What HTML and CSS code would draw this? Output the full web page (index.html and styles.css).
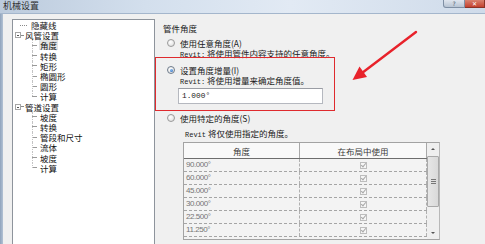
FILE: index.html
```html
<!DOCTYPE html>
<html lang="zh-CN">
<head>
<meta charset="utf-8">
<title>机械设置</title>
<link rel="stylesheet" href="styles.css">
</head>
<body>
<div class="window">
  <div class="titlebar">
    <span class="title">机械设置</span>
    <div class="caption-btns">
      <span class="cbtn help">?</span>
      <span class="cbtn close">✕</span>
    </div>
  </div>
  <div class="main">
    <div class="frame-left"></div>
    <ul class="tree">
      <li class="row top leaf"><span class="conn"></span><span class="txt">隐藏线</span></li>
      <li class="row top parent"><span class="exp"></span><span class="conn"></span><span class="txt">风管设置</span></li>
      <li class="row child"><span class="conn"></span><span class="txt sel">角度</span></li>
      <li class="row child"><span class="conn"></span><span class="txt">转换</span></li>
      <li class="row child"><span class="conn"></span><span class="txt">矩形</span></li>
      <li class="row child"><span class="conn"></span><span class="txt">椭圆形</span></li>
      <li class="row child"><span class="conn"></span><span class="txt">圆形</span></li>
      <li class="row child last"><span class="conn"></span><span class="txt">计算</span></li>
      <li class="row top parent"><span class="exp"></span><span class="conn"></span><span class="txt">管道设置</span></li>
      <li class="row child"><span class="conn"></span><span class="txt">坡度</span></li>
      <li class="row child"><span class="conn"></span><span class="txt">转换</span></li>
      <li class="row child"><span class="conn"></span><span class="txt">管段和尺寸</span></li>
      <li class="row child"><span class="conn"></span><span class="txt">流体</span></li>
      <li class="row child"><span class="conn"></span><span class="txt">坡度</span></li>
      <li class="row child last"><span class="conn"></span><span class="txt">计算</span></li>
    </ul>
    <div class="content">
      <div class="heading">管件角度</div>
      <div class="opt opt1"><span class="radio"></span><span class="lbl">使用任意角度(A)</span></div>
      <div class="desc"><span class="latin">Revit:</span> 将使用管件内容支持的任意角度。</div>
      <div class="opt opt2"><span class="radio checked"></span><span class="lbl">设置角度增量(I)</span></div>
      <div class="desc"><span class="latin">Revit:</span> 将使用增量来确定角度值。</div>
      <div class="input">1.000°</div>
      <div class="opt opt3"><span class="radio"></span><span class="lbl">使用特定的角度(S)</span></div>
      <div class="desc desc3"><span class="latin">Revit</span> 将仅使用指定的角度。</div>
      <div class="table">
        <div class="grid">
          <div class="thead"><div class="th c1">角度</div><div class="th c2">在布局中使用</div></div>
          <div class="tr"><div class="td c1">90.000°</div><div class="td c2"><span class="chk"></span></div></div>
          <div class="tr"><div class="td c1">60.000°</div><div class="td c2"><span class="chk"></span></div></div>
          <div class="tr"><div class="td c1">45.000°</div><div class="td c2"><span class="chk"></span></div></div>
          <div class="tr"><div class="td c1">30.000°</div><div class="td c2"><span class="chk"></span></div></div>
          <div class="tr"><div class="td c1">22.500°</div><div class="td c2"><span class="chk"></span></div></div>
          <div class="tr"><div class="td c1">11.250°</div><div class="td c2"><span class="chk"></span></div></div>
        </div>
        <div class="vscroll">
          <span class="sarrow up"></span>
          <span class="thumb"><span class="grip"></span></span>
          <span class="strack"></span>
          <span class="sarrow down"></span>
        </div>
      </div>
    </div>
  </div>
  <div class="annot-box"></div>
  <svg class="annot-arrow" width="485" height="244" viewBox="0 0 485 244">
    <line x1="416" y1="32" x2="362" y2="73" stroke="#e8222b" stroke-width="2.4" stroke-linecap="round"/>
    <polygon points="352.5,80 367,77 359.5,66.5" fill="#e8222b"/>
  </svg>
</div>
</body>
</html>
```

FILE: styles.css
```css
* { box-sizing: border-box; }
html, body { margin: 0; padding: 0; }
body {
  width: 485px;
  height: 244px;
  overflow: hidden;
  background: #f0f0f0;
  font-family: "Noto Sans CJK SC", "Noto Sans", sans-serif;
  font-size: 8.5px;
  color: #1a1a1a;
}
.window {
  position: relative;
  width: 485px;
  height: 244px;
  display: flex;
  flex-direction: column;
}
.titlebar {
  height: 14px;
  flex: none;
  display: flex;
  align-items: flex-start;
  background: linear-gradient(to right, #bccbdd 0%, #d3dfed 30%, #e2eaf4 60%, #cfdbea 100%);
  border-bottom: 1px solid #a4b6cc;
}
.title {
  padding-left: 3px;
  height: 11px;
  line-height: 11px;
  overflow: hidden;
  color: #2e2e2e;
  font-size: 9px;
}
.caption-btns {
  margin-left: auto;
  display: flex;
}
.cbtn {
  height: 8px;
  display: flex;
  align-items: center;
  justify-content: center;
  font-family: "DejaVu Sans", sans-serif;
  font-size: 6px;
  line-height: 8px;
  overflow: hidden;
}
.help {
  width: 22px;
  background: linear-gradient(#dfe5ee, #b8c4d3);
  border: 1px solid #7f8fa4;
  border-top: none;
  border-radius: 0 0 0 3px;
  color: #4b5a6e;
}
.close {
  width: 20px;
  background: linear-gradient(#d9826f, #c4412f);
  border: 1px solid #8a3326;
  border-top: none;
  border-left: none;
  color: #fff;
  font-weight: bold;
}
.main {
  flex: 1;
  display: flex;
  min-height: 0;
}
.frame-left {
  width: 3px;
  flex: none;
  background: linear-gradient(to right, #8fa3bc, #b3c2d4);
}
.tree {
  list-style: none;
  margin: 5px 0 0 9px;
  padding: 0;
  width: 143px;
  flex: none;
  background: #fff;
  border: 1px solid #8e949c;
  border-bottom: none;
}
.row {
  position: relative;
  height: 10.2px;
  display: flex;
  align-items: center;
  white-space: nowrap;
  color: #111;
}
.row .conn {
  height: 0;
  border-top: 1px dotted #8a8a8a;
  flex: none;
}
.row.leaf .conn { margin-left: 7px; width: 7px; margin-right: 3px; }
.row.parent .exp {
  margin-left: 2px;
  width: 6px;
  height: 6px;
  border: 1px solid #a6a6a6;
  position: relative;
  flex: none;
  background: #fff;
}
.row.parent .exp::after {
  content: "";
  position: absolute;
  left: 1px;
  right: 1px;
  top: 2px;
  border-top: 1px solid #555;
}
.row.parent .conn { width: 2px; margin-right: 1px; }
.row.child .conn { margin-left: 19px; width: 5px; border-top: 1px solid #9a9a9a; margin-right: 2px; }
.row.child::before {
  content: "";
  position: absolute;
  left: 19px;
  top: 0;
  bottom: 0;
  border-left: 1px dotted #c4c4c4;
}
.row.child.last::before { bottom: 50%; }
.txt {
  display: block;
  height: 10px;
  line-height: 10px;
  padding: 0 1px;
  overflow: visible;
}
.txt.sel { background: #e3e3e3; }

.content {
  flex: 1;
  display: flex;
  flex-direction: column;
  align-items: flex-start;
  padding-top: 9px;
  line-height: 10px;
  white-space: nowrap;
}
.heading { margin-left: 8px; height: 10px; }
.opt {
  display: flex;
  align-items: center;
  height: 10px;
  margin-left: 12px;
  gap: 5px;
}
.lbl { display: block; height: 10px; line-height: 10px; }
.opt1 { margin-top: 5px; }
.opt2 { margin-top: 7px; }
.opt3 { margin-top: 9px; }
.radio {
  width: 8px;
  height: 8px;
  border-radius: 50%;
  border: 1px solid #9a9a9a;
  background: radial-gradient(circle at 40% 35%, #ffffff 0%, #e8e8e8 60%, #d4d4d4 100%);
  flex: none;
  position: relative;
}
.radio.checked { border-color: #6f7c8c; }
.radio.checked::after {
  content: "";
  position: absolute;
  left: 1.5px;
  top: 1.5px;
  width: 3px;
  height: 3px;
  border-radius: 50%;
  background: radial-gradient(circle at 40% 35%, #8fc0f0, #1f5fb8);
}
.desc { margin-left: 25px; height: 10px; }
.desc3 { margin-left: 30px; margin-top: 5px; }
.latin {
  font-family: "Liberation Mono", monospace;
  font-size: 7px;
}
.input {
  margin-top: 3px;
  margin-left: 23px;
  width: 145px;
  height: 16px;
  background: #fff;
  border: 1px solid #b5b8bf;
  border-top-color: #9a9da4;
  padding-left: 3px;
  font-family: "Liberation Mono", monospace;
  font-size: 7.8px;
  line-height: 14px;
  color: #222;
}
.table {
  margin-top: 4px;
  margin-left: 28px;
  width: 257px;
  height: 98px;
  display: flex;
  border: 1px solid #a3a3a3;
  border-right: 1px solid #b8b8b8;
  background: #f3f3f3;
}
.grid {
  width: 243px;
  flex: none;
  display: flex;
  flex-direction: column;
}
.thead {
  height: 16px;
  display: flex;
  background: #f9f9f9;
  border-bottom: 1px solid #6e6e6e;
  color: #3a3a3a;
}
.th {
  display: flex;
  align-items: center;
  justify-content: center;
  line-height: 14px;
}
.c1 { width: 116px; flex: none; }
.c2 { flex: 1; }
.th.c1 { border-right: 1px solid #a8a8a8; }
.th.c2 { border-right: 1px solid #a8a8a8; }
.tr {
  height: 13px;
  display: flex;
  border-bottom: 1px dashed #a5a5a5;
}
.td {
  display: flex;
  align-items: center;
  height: 100%;
}
.td.c1 {
  padding-left: 2px;
  font-family: "Liberation Sans", sans-serif;
  font-size: 8px;
  letter-spacing: -0.45px;
  color: #767676;
  border-right: 1px dashed #b0b0b0;
}
.td.c2 {
  justify-content: center;
  border-right: 1px dashed #b0b0b0;
}
.chk {
  width: 7px;
  height: 7px;
  border: 1px solid #bdbdbd;
  background: #f6f6f6;
  position: relative;
}
.chk::after {
  content: "";
  position: absolute;
  left: 1.5px;
  top: -0.5px;
  width: 2px;
  height: 4px;
  border-right: 1px solid #a8a8a8;
  border-bottom: 1px solid #a8a8a8;
  transform: rotate(40deg);
}
.vscroll {
  flex: 1;
  display: flex;
  flex-direction: column;
  background: #efefef;
}
.sarrow {
  height: 13px;
  flex: none;
  position: relative;
}
.sarrow::after {
  content: "";
  position: absolute;
  left: 4px;
  border-left: 2px solid transparent;
  border-right: 2px solid transparent;
}
.sarrow.up::after { top: 5px; border-bottom: 2px solid #555; }
.sarrow.down::after { top: 6px; border-top: 2px solid #555; }
.thumb {
  height: 51px;
  flex: none;
  background: linear-gradient(to right, #e6e6e6, #d9d9d9);
  border: 1px solid #a9a9a9;
  border-radius: 1px;
  display: flex;
  align-items: center;
  justify-content: center;
}
.grip {
  width: 5px;
  height: 5px;
  border-top: 1px solid #777;
  border-bottom: 1px solid #777;
  position: relative;
}
.grip::after {
  content: "";
  position: absolute;
  left: 0;
  right: 0;
  top: 1px;
  border-top: 1px solid #777;
}
.strack { flex: 1; }
.annot-box {
  position: absolute;
  left: 155px;
  top: 57px;
  width: 180px;
  height: 54px;
  border: 1.5px solid #df2a2e;
}
.annot-arrow {
  position: absolute;
  left: 0;
  top: 0;
  pointer-events: none;
}
```
